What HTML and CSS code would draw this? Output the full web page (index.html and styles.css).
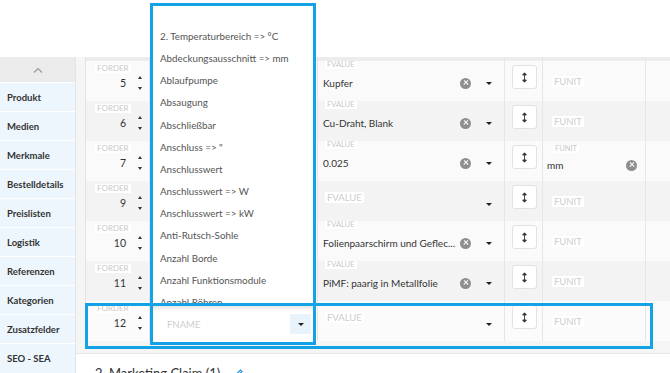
FILE: index.html
```html
<!DOCTYPE html>
<html lang="de">
<head>
  <meta charset="UTF-8">
  <title>Merkmale</title>
  <link rel="stylesheet" href="styles.css">
</head>
<body>
<div class="page">
  <div class="topbar"></div>

  <div class="main">
    <nav class="side">
      <div class="side-up">
        <svg width="10" height="6" viewBox="0 0 10 6"><path d="M1 5.5 L5 1.5 L9 5.5" fill="none" stroke="#9a9a9a" stroke-width="1.2"/></svg>
      </div>
      <a class="side-item">Produkt</a>
      <a class="side-item">Medien</a>
      <a class="side-item">Merkmale</a>
      <a class="side-item">Bestelldetails</a>
      <a class="side-item">Preislisten</a>
      <a class="side-item">Logistik</a>
      <a class="side-item">Referenzen</a>
      <a class="side-item">Kategorien</a>
      <a class="side-item">Zusatzfelder</a>
      <a class="side-item">SEO - SEA</a>
    </nav>

    <section class="content">
      <div class="panel">
        <div class="grid head">
          <div class="cell"></div><div class="cell"></div><div class="cell"></div>
          <div class="cell"></div><div class="cell"></div><div class="cell last"></div>
        </div>

        <div class="grid row light">
          <div class="cell c-order"><span class="lbl">FORDER</span><div class="order-val"><span>5</span><span class="spin"><i class="up"></i><i class="down"></i></span></div></div>
          <div class="cell c-name"></div>
          <div class="cell c-value"><span class="lbl">FVALUE</span><div class="val"><span class="txt">Kupfer</span><span class="clear"></span><span class="caret"></span></div></div>
          <div class="cell c-btn"><span class="sort"><svg width="5" height="11" viewBox="0 0 5 11"><path d="M2.5 1 V10 M0.6 3 L2.5 0.8 L4.4 3 Z M0.6 8 L2.5 10.2 L4.4 8 Z" stroke="#333" stroke-width="0.9" fill="#333"/></svg></span></div>
          <div class="cell c-unit"><span class="ph unit-ph">FUNIT</span></div>
          <div class="cell last"></div>
        </div>

        <div class="grid row dark">
          <div class="cell c-order"><span class="lbl">FORDER</span><div class="order-val"><span>6</span><span class="spin"><i class="up"></i><i class="down"></i></span></div></div>
          <div class="cell c-name"></div>
          <div class="cell c-value"><span class="lbl">FVALUE</span><div class="val"><span class="txt">Cu-Draht, Blank</span><span class="clear"></span><span class="caret"></span></div></div>
          <div class="cell c-btn"><span class="sort"><svg width="5" height="11" viewBox="0 0 5 11"><path d="M2.5 1 V10 M0.6 3 L2.5 0.8 L4.4 3 Z M0.6 8 L2.5 10.2 L4.4 8 Z" stroke="#333" stroke-width="0.9" fill="#333"/></svg></span></div>
          <div class="cell c-unit"><span class="ph unit-ph">FUNIT</span></div>
          <div class="cell last"></div>
        </div>

        <div class="grid row light">
          <div class="cell c-order"><span class="lbl">FORDER</span><div class="order-val"><span>7</span><span class="spin"><i class="up"></i><i class="down"></i></span></div></div>
          <div class="cell c-name"></div>
          <div class="cell c-value"><span class="lbl">FVALUE</span><div class="val"><span class="txt">0.025</span><span class="clear"></span><span class="caret"></span></div></div>
          <div class="cell c-btn"><span class="sort"><svg width="5" height="11" viewBox="0 0 5 11"><path d="M2.5 1 V10 M0.6 3 L2.5 0.8 L4.4 3 Z M0.6 8 L2.5 10.2 L4.4 8 Z" stroke="#333" stroke-width="0.9" fill="#333"/></svg></span></div>
          <div class="cell c-unit filled"><span class="lbl">FUNIT</span><div class="val"><span class="txt">mm</span><span class="clear"></span></div></div>
          <div class="cell last"></div>
        </div>

        <div class="grid row dark">
          <div class="cell c-order"><span class="lbl">FORDER</span><div class="order-val"><span>9</span><span class="spin"><i class="up"></i><i class="down"></i></span></div></div>
          <div class="cell c-name"></div>
          <div class="cell c-value empty"><div class="val"><span class="ph">FVALUE</span><span class="caret"></span></div></div>
          <div class="cell c-btn"><span class="sort"><svg width="5" height="11" viewBox="0 0 5 11"><path d="M2.5 1 V10 M0.6 3 L2.5 0.8 L4.4 3 Z M0.6 8 L2.5 10.2 L4.4 8 Z" stroke="#333" stroke-width="0.9" fill="#333"/></svg></span></div>
          <div class="cell c-unit"><span class="ph unit-ph">FUNIT</span></div>
          <div class="cell last"></div>
        </div>

        <div class="grid row light">
          <div class="cell c-order"><span class="lbl">FORDER</span><div class="order-val"><span>10</span><span class="spin"><i class="up"></i><i class="down"></i></span></div></div>
          <div class="cell c-name"></div>
          <div class="cell c-value"><span class="lbl">FVALUE</span><div class="val"><span class="txt">Folienpaarschirm und Geflec...</span><span class="clear"></span><span class="caret"></span></div></div>
          <div class="cell c-btn"><span class="sort"><svg width="5" height="11" viewBox="0 0 5 11"><path d="M2.5 1 V10 M0.6 3 L2.5 0.8 L4.4 3 Z M0.6 8 L2.5 10.2 L4.4 8 Z" stroke="#333" stroke-width="0.9" fill="#333"/></svg></span></div>
          <div class="cell c-unit"><span class="ph unit-ph">FUNIT</span></div>
          <div class="cell last"></div>
        </div>

        <div class="grid row dark">
          <div class="cell c-order"><span class="lbl">FORDER</span><div class="order-val"><span>11</span><span class="spin"><i class="up"></i><i class="down"></i></span></div></div>
          <div class="cell c-name"></div>
          <div class="cell c-value"><span class="lbl">FVALUE</span><div class="val"><span class="txt">PiMF: paarig in Metallfolie</span><span class="clear"></span><span class="caret"></span></div></div>
          <div class="cell c-btn"><span class="sort"><svg width="5" height="11" viewBox="0 0 5 11"><path d="M2.5 1 V10 M0.6 3 L2.5 0.8 L4.4 3 Z M0.6 8 L2.5 10.2 L4.4 8 Z" stroke="#333" stroke-width="0.9" fill="#333"/></svg></span></div>
          <div class="cell c-unit"><span class="ph unit-ph">FUNIT</span></div>
          <div class="cell last"></div>
        </div>

        <div class="grid row new">
          <div class="cell c-order"><span class="lbl">FORDER</span><div class="order-val"><span>12</span><span class="spin"><i class="up"></i><i class="down"></i></span></div></div>
          <div class="cell c-name"></div>
          <div class="cell c-value empty"><div class="val"><span class="ph">FVALUE</span><span class="caret"></span></div></div>
          <div class="cell c-btn"><span class="sort"><svg width="5" height="11" viewBox="0 0 5 11"><path d="M2.5 1 V10 M0.6 3 L2.5 0.8 L4.4 3 Z M0.6 8 L2.5 10.2 L4.4 8 Z" stroke="#333" stroke-width="0.9" fill="#333"/></svg></span></div>
          <div class="cell c-unit"><span class="ph unit-ph">FUNIT</span></div>
          <div class="cell last"></div>
        </div>
      </div>

      <div class="next">
        <h3>2. Marketing Claim (1)</h3>
        <svg width="9" height="9" viewBox="0 0 9 9"><path d="M1 8 L1.5 6 L6.5 1 L8 2.5 L3 7.5 Z" fill="none" stroke="#1a8fd8" stroke-width="1.2"/></svg>
      </div>
    </section>
  </div>

  <!-- open FNAME select -->
  <div class="dropdown">
    <ul class="dd-list">
      <li>2. Temperaturbereich =&gt; °C</li>
      <li>Abdeckungsausschnitt =&gt; mm</li>
      <li>Ablaufpumpe</li>
      <li>Absaugung</li>
      <li>Abschließbar</li>
      <li>Anschluss =&gt; "</li>
      <li>Anschlusswert</li>
      <li>Anschlusswert =&gt; W</li>
      <li>Anschlusswert =&gt; kW</li>
      <li>Anti-Rutsch-Sohle</li>
      <li>Anzahl Borde</li>
      <li>Anzahl Funktionsmodule</li>
      <li>Anzahl Röhren</li>
    </ul>
    <div class="dd-input">
      <span class="ph">FNAME</span>
      <span class="dd-btn"><span class="caret"></span></span>
    </div>
  </div>

  <div class="hl-row"></div>
</div>
</body>
</html>
```

FILE: styles.css
```css
body {
  margin: 0;
  font-family: Lato, "Noto Sans", sans-serif;
  color: #333;
  background: #fff;
  overflow: hidden;
}
.page {
  position: relative;
  width: 670px;
  height: 373px;
  overflow: hidden;
}
.topbar {
  height: 57px;
  background: #fff;
}
.main {
  display: flex;
}

/* sidebar */
.side {
  width: 75px;
  flex: none;
  background: #edf6fd;
  border-right: 1px solid #e4e4e4;
}
.side-up {
  height: 25px;
  background: #ebebeb;
  display: flex;
  align-items: center;
  justify-content: center;
}
.side-item {
  display: flex;
  align-items: center;
  height: 28px;
  padding-left: 7px;
  border-top: 1px solid #fff;
  font-size: 9.5px;
  font-weight: 700;
  color: #333;
  white-space: nowrap;
}

/* content */
.content {
  flex: 1;
  min-width: 0;
  background: #fff;
}
.panel {
  background: #f5f5f5;
  padding: 0 0 12px 9px;
  border-bottom: 1px solid #e8e8e8;
}
.grid {
  display: grid;
  grid-template-columns: 64px 168px 187px 38px 103px 1fr;
  border-left: 1px solid #e2e2e2;
}
.head {
  height: 4px;
  background: #ececec;
}
.row {
  height: 40px;
}
.row.light { background: #fafafa; }
.row.dark { background: #f3f3f3; }
.row.new { background: #fbfbfb; }
.cell {
  border-right: 1px solid #e6e6e6;
  min-width: 0;
  font-size: 10px;
  line-height: 1.2;
}
.cell.last {
  border-right: 0;
}

.lbl {
  display: block;
  width: max-content;
  background: #fff;
  color: #c9c9c9;
  font-size: 7.5px;
  line-height: 8px;
  padding: 0 2px;
}
.ph {
  display: block;
  width: max-content;
  background: #fff;
  color: #cdcdcd;
  font-size: 9.5px;
  line-height: 11px;
  padding: 0 2px;
}

/* FORDER */
.c-order {
  padding-top: 3px;
}
.c-order .lbl {
  margin-left: 9px;
  line-height: 9px;
  font-size: 8px;
}
.order-val {
  display: flex;
  align-items: center;
  justify-content: flex-end;
  gap: 12px;
  height: 14px;
  margin-top: 3px;
  padding-right: 7px;
  font-size: 10.5px;
  color: #333;
}
.spin {
  display: flex;
  flex-direction: column;
  gap: 8px;
}
.spin i {
  display: block;
  width: 0;
  height: 0;
  border-left: 2.5px solid transparent;
  border-right: 2.5px solid transparent;
}
.spin .up { border-bottom: 3px solid #333; }
.spin .down { border-top: 3px solid #333; }

/* FVALUE */
.c-value {
  padding: 0 12px 0 5px;
}
.c-value .lbl {
  margin-left: 2px;
}
.val {
  display: flex;
  align-items: center;
  height: 14px;
  margin-top: 7px;
}
.val .txt {
  flex: 1;
  min-width: 0;
  font-size: 10px;
  color: #333;
  white-space: nowrap;
  overflow: hidden;
}
.clear {
  width: 11px;
  height: 11px;
  border-radius: 50%;
  background: #8e8e8e;
  position: relative;
  flex: none;
}
.clear::before,
.clear::after {
  content: "";
  position: absolute;
  left: 2.5px;
  top: 4.8px;
  width: 6px;
  height: 1.4px;
  background: #fff;
  transform: rotate(45deg);
}
.clear::after {
  transform: rotate(-45deg);
}
.caret {
  width: 0;
  height: 0;
  border-left: 3px solid transparent;
  border-right: 3px solid transparent;
  border-top: 3.5px solid #222;
  flex: none;
}
.c-value .clear {
  margin-right: 15px;
}
.c-value.empty {
  padding-top: 11px;
}
.c-value.empty .val {
  height: 24px;
  margin-top: 0;
  align-items: flex-start;
  justify-content: space-between;
}
.c-value.empty .ph {
  margin-left: 2px;
}
.c-value.empty .caret {
  align-self: center;
}

/* button */
.c-btn {
  padding: 4px 0 0 7px;
}
.sort {
  display: flex;
  align-items: center;
  justify-content: center;
  width: 23px;
  height: 22px;
  background: #fff;
  border: 1px solid #e2e2e2;
  border-radius: 3px;
}

/* FUNIT */
.c-unit {
  padding-top: 15px;
}
.unit-ph {
  margin-left: 9px;
}
.c-unit.filled {
  padding: 4px 8px 0 4px;
}
.c-unit.filled .lbl {
  margin-left: 6px;
}
.c-unit.filled .val {
  margin-top: 5px;
}

/* next section */
.next {
  display: flex;
  align-items: center;
  gap: 14px;
  padding: 10px 0 0 19px;
}
.next h3 {
  margin: 0;
  font-size: 13px;
  line-height: 18px;
  font-weight: 400;
  color: #333;
}

/* open select list */
.dropdown {
  position: absolute;
  left: 150px;
  top: 3px;
  width: 166px;
}
.dd-list {
  box-sizing: border-box;
  height: 303px;
  margin: 0;
  padding: 19px 0 0 0;
  list-style: none;
  background: #fff;
  border: 3px solid #13a2e6;
  overflow: hidden;
}
.dd-list li {
  height: 22.17px;
  line-height: 22.17px;
  padding-left: 7px;
  font-size: 9.8px;
  color: #555;
  white-space: nowrap;
}
.dd-input {
  box-sizing: border-box;
  height: 39px;
  display: flex;
  align-items: center;
  justify-content: space-between;
  padding: 0 2px 0 12px;
  background: #fff;
  border: 3px solid #13a2e6;
  border-top: 0;
  box-shadow: inset 0 5px 5px -3px rgba(0, 0, 0, 0.12);
}
.dd-btn {
  display: flex;
  align-items: center;
  justify-content: center;
  width: 21px;
  height: 20px;
  background: #e8f3fb;
}

.hl-row {
  position: absolute;
  left: 85px;
  top: 303px;
  width: 568px;
  height: 46px;
  box-sizing: border-box;
  border: 3px solid #13a2e6;
}
```
